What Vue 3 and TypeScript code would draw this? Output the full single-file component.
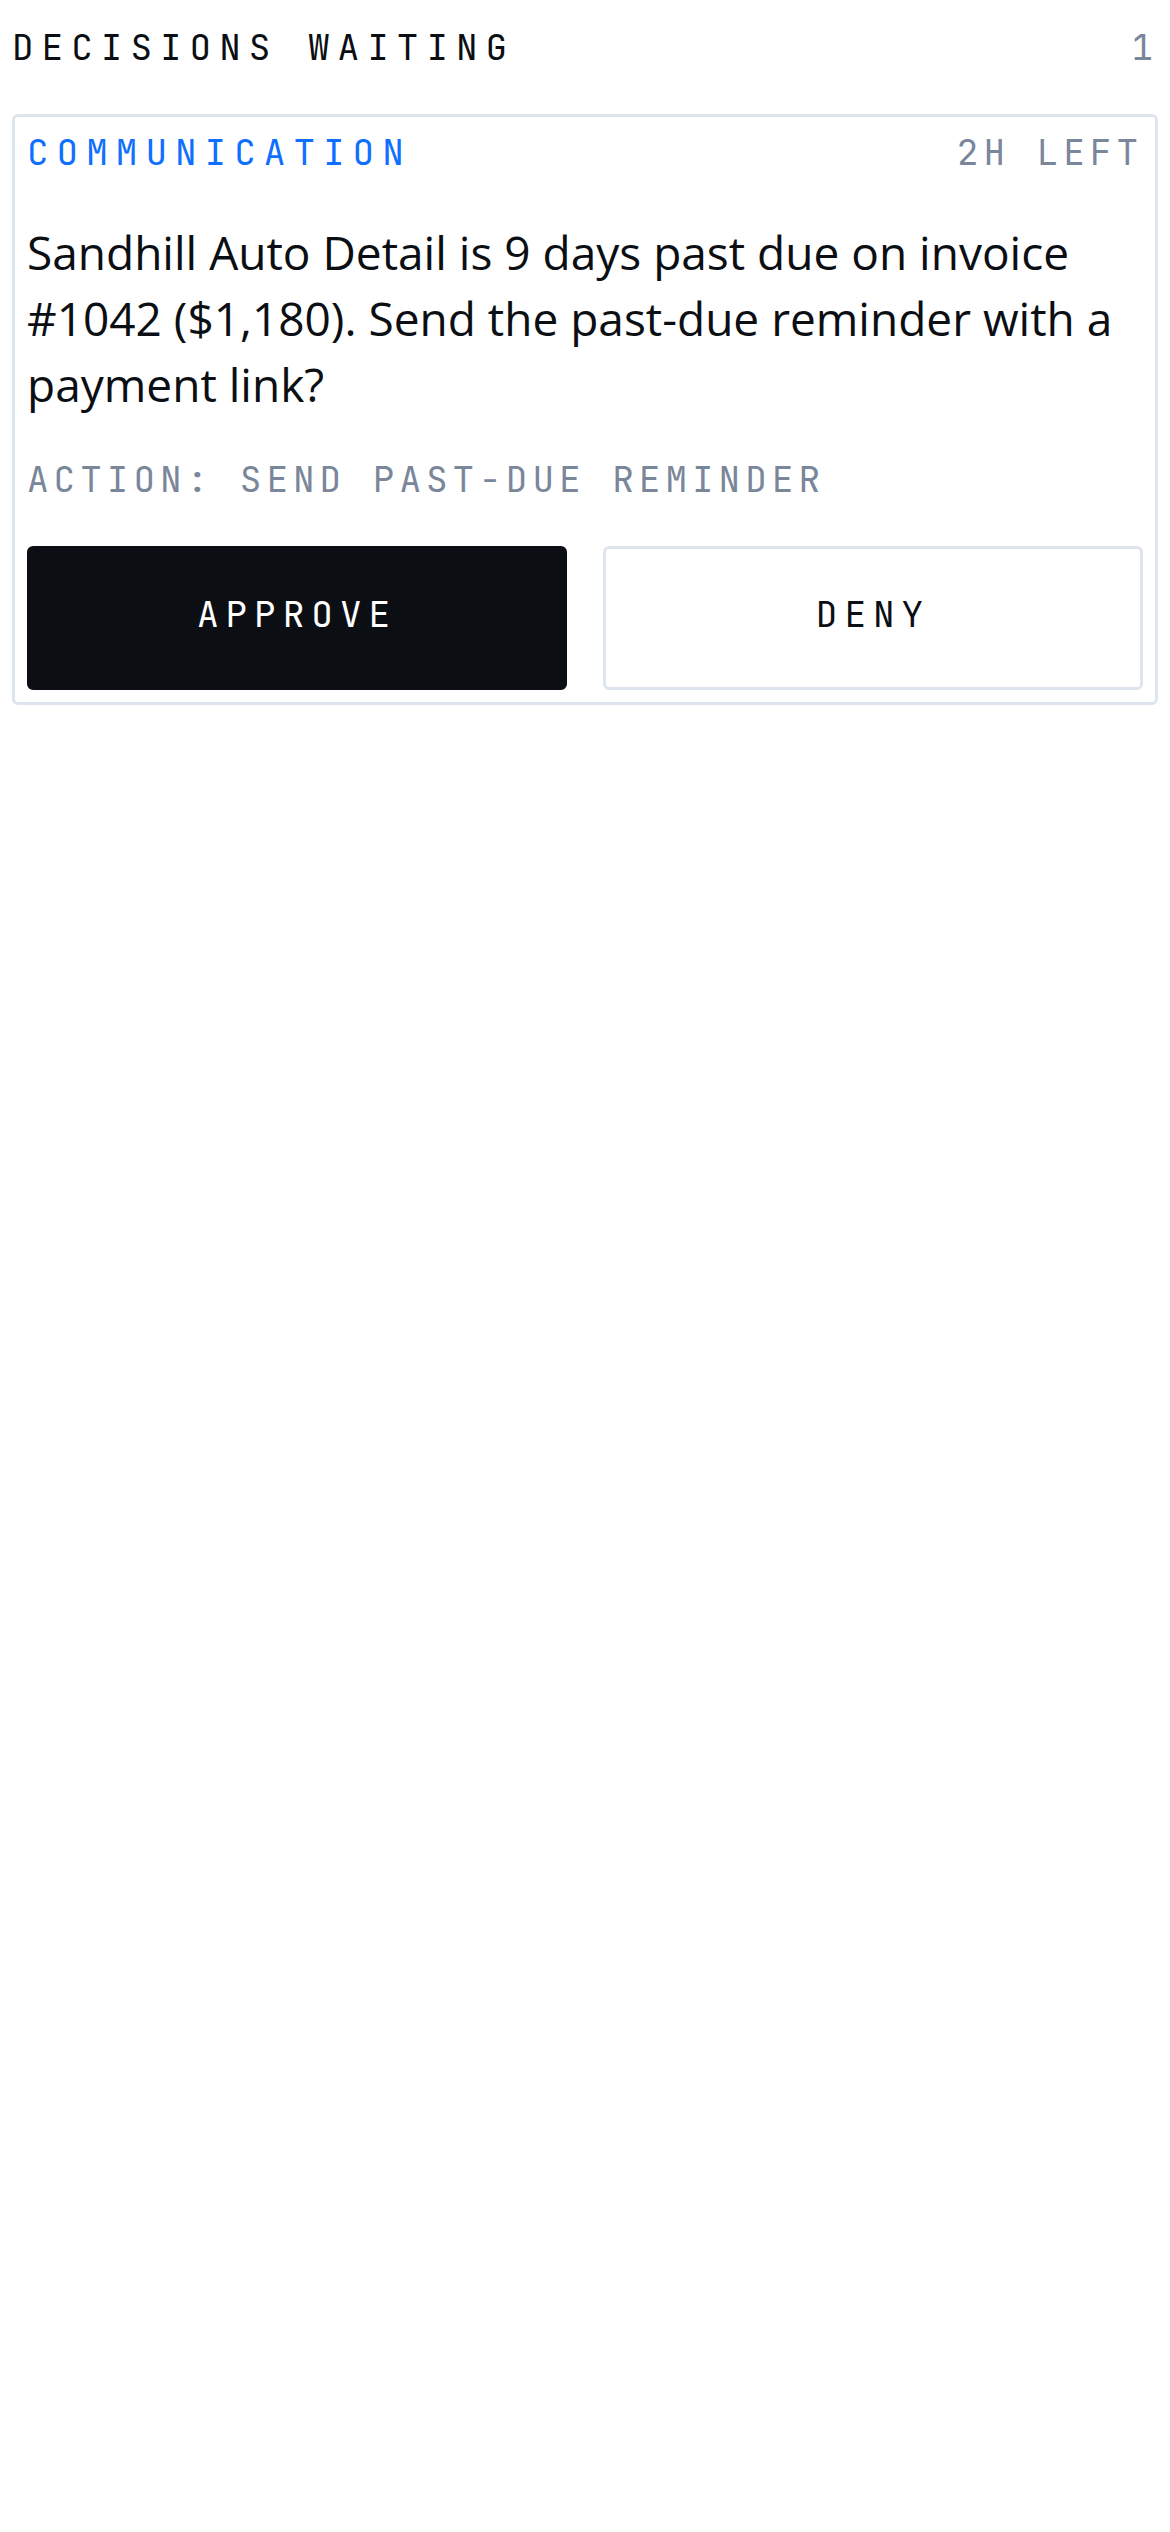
<script setup lang="ts">
import { ref } from 'vue'

interface Decision {
  id: number
  category: string
  remaining: string
  question: string
  action: string
}

const decisions = ref<Decision[]>([
  {
    id: 1,
    category: 'COMMUNICATION',
    remaining: '2H LEFT',
    question:
      'Sandhill Auto Detail is 9 days past due on invoice #1042 ($1,180). Send the past-due reminder with a payment link?',
    action: 'SEND PAST-DUE REMINDER',
  },
])
</script>

<template>
  <main class="page">
    <header class="row">
      <h1 class="label title">DECISIONS WAITING</h1>
      <span class="label muted">{{ decisions.length }}</span>
    </header>

    <article v-for="decision in decisions" :key="decision.id" class="card">
      <div class="row">
        <span class="label category">{{ decision.category }}</span>
        <span class="label muted">{{ decision.remaining }}</span>
      </div>
      <p class="question">{{ decision.question }}</p>
      <p class="label muted action">ACTION: {{ decision.action }}</p>
      <div class="buttons">
        <button type="button" class="label button approve">APPROVE</button>
        <button type="button" class="label button deny">DENY</button>
      </div>
    </article>
  </main>
</template>

<style>
body {
  margin: 0;
  background: #ffffff;
}
</style>

<style scoped>
.page {
  padding: 24px 12px;
  color: #0b0f14;
}

.row {
  display: flex;
  align-items: baseline;
  justify-content: space-between;
}

.label {
  margin: 0;
  font-family: 'JetBrains Mono', 'DejaVu Sans Mono', monospace;
  font-size: 36px;
  font-weight: 400;
  line-height: 46px;
  letter-spacing: 5px;
}

.title,
.category {
  letter-spacing: 8px;
}

.category {
  color: #0f6fff;
}

.muted {
  color: #7a869a;
}

.card {
  margin-top: 44px;
  padding: 12px;
  border: 3px solid #dfe5ec;
  border-radius: 6px;
}

.question {
  margin: 44px 0 39px;
  font-family: 'Segoe UI', 'Open Sans', 'Noto Sans', sans-serif;
  font-size: 46px;
  line-height: 66px;
}

.buttons {
  display: grid;
  grid-template-columns: 1fr 1fr;
  gap: 36px;
  margin-top: 44px;
}

.button {
  min-height: 144px;
  padding: 0 0 8px;
  border: 3px solid #dfe5ec;
  border-radius: 6px;
  letter-spacing: 7px;
  cursor: pointer;
}

.approve {
  border-color: #0b0f14;
  background: #0b0f14;
  color: #ffffff;
}

.deny {
  background: transparent;
  color: #0b0f14;
}
</style>
